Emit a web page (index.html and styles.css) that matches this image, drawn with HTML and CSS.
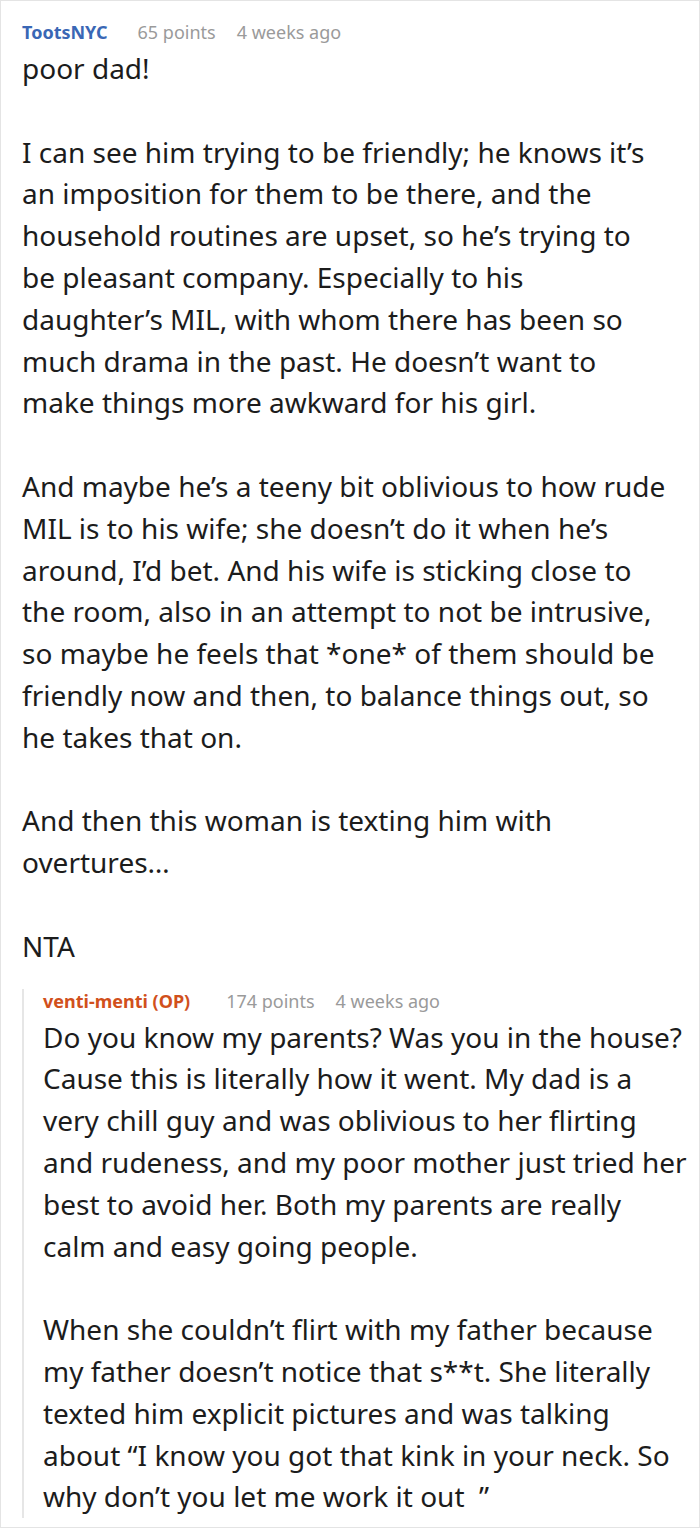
FILE: index.html
```html
<!DOCTYPE html>
<html>
<head>
<meta charset="utf-8">
<link rel="stylesheet" href="styles.css">
</head>
<body>
<div class="thread">
  <div class="comment">
    <div class="meta">
      <span class="user">TootsNYC</span>
      <span class="points">65 points</span>
      <span class="time">4 weeks ago</span>
    </div>
    <div class="text">
      <p>poor dad!</p>
      <p>I can see him trying to be friendly; he knows it’s<br>an imposition for them to be there, and the<br>household routines are upset, so he’s trying to<br>be pleasant company. Especially to his<br>daughter’s MIL, with whom there has been so<br>much drama in the past. He doesn’t want to<br>make things more awkward for his girl.</p>
      <p>And maybe he’s a teeny bit oblivious to how rude<br>MIL is to his wife; she doesn’t do it when he’s<br>around, I’d bet. And his wife is sticking close to<br>the room, also in an attempt to not be intrusive,<br>so maybe he feels that *one* of them should be<br>friendly now and then, to balance things out, so<br>he takes that on.</p>
      <p>And then this woman is texting him with<br>overtures…</p>
      <p>NTA</p>
    </div>
    <div class="reply">
      <div class="meta">
        <span class="user op">venti-menti (OP)</span>
        <span class="points">174 points</span>
        <span class="time">4 weeks ago</span>
      </div>
      <div class="text">
        <p>Do you know my parents? Was you in the house?<br>Cause this is literally how it went. My dad is a<br>very chill guy and was oblivious to her flirting<br>and rudeness, and my poor mother just tried her<br>best to avoid her. Both my parents are really<br>calm and easy going people.</p>
        <p>When she couldn’t flirt with my father because<br>my father doesn’t notice that s**t. She literally<br>texted him explicit pictures and was talking<br>about “I know you got that kink in your neck. So<br>why don’t you let me work it out &nbsp;”</p>
      </div>
    </div>
  </div>
</div>
</body>
</html>
```

FILE: styles.css
```css
html, body {
  margin: 0;
  padding: 0;
  background: #ffffff;
}

.thread {
  width: 700px;
  height: 1528px;
  box-sizing: border-box;
  border: 1px solid #e4e4e4;
  overflow: hidden;
  font-family: "Noto Sans", "Open Sans", sans-serif;
  color: #1c1c1c;
}

.comment {
  padding: 19px 0 0 21px;
}

.meta {
  display: flex;
  align-items: center;
  font-size: 18px;
  line-height: 24px;
  color: #9a9a9a;
  margin-bottom: 4px;
}

.user {
  font-weight: 700;
  color: #3a67b5;
  margin-right: 30px;
}

.user.op {
  color: #d1501c;
  margin-right: 36px;
}

.points {
  margin-right: 21px;
}

.text {
  font-size: 28px;
  line-height: 41.8px;
}

.text p {
  margin: 0 0 41.8px 0;
}

.text p:last-child {
  margin-bottom: 0;
}

.reply {
  margin-top: 21px;
  border-left: 2px solid #e6e6e6;
  padding-left: 19px;
}
```
